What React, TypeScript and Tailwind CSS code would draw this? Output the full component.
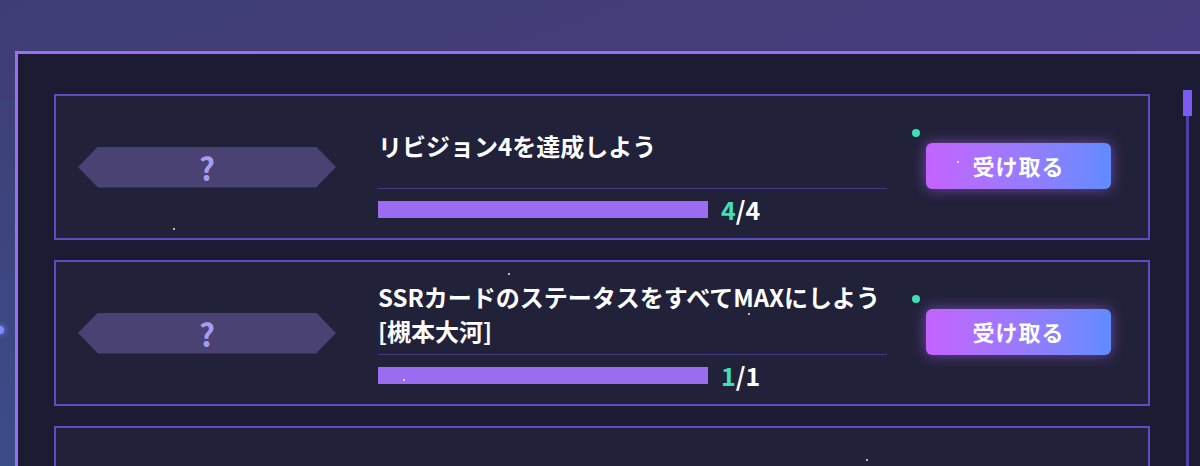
import React from "react";

const FONT = { fontFamily: '"Noto Sans CJK JP", "Noto Sans", sans-serif' };

function Hex() {
  return (
    <div
      className="w-[258px] h-[41px] bg-[#4a4273] flex items-center justify-center shrink-0"
      style={{ clipPath: "polygon(20px 0, 238px 0, 258px 50%, 238px 100%, 20px 100%, 0 50%)" }}
    >
      <span className="text-[31px] font-bold text-[#a89cf0] leading-none">?</span>
    </div>
  );
}

function Card({ title, done, total }: { title: React.ReactNode; done: number; total: number }) {
  return (
    <div className="relative shrink-0 h-[146px] border-2 border-[#5b4cc4] bg-[#22213a] flex items-center pl-[22px]">
      <Hex />
      <div className="ml-[42px] w-[509px] h-full flex flex-col justify-end pb-[17px]">
        <div className="relative -top-[2px] min-h-[53px] text-[24px] leading-[34px] font-bold text-white">{title}</div>
        <div className="mt-[4px] h-px bg-[#3f3a7c]" />
        <div className="mt-[8px] h-[24px] flex items-center">
          <div className="w-[330px] h-[17px] bg-[#9b6cf0]" />
          <div className="ml-[13px] text-[25px] leading-[24px] font-bold text-white">
            <span className="text-[#3fe0b8]">{done}</span>/{total}
          </div>
        </div>
      </div>
      <div className="relative ml-[39px] -mt-[3px]">
        <div className="absolute -left-[14px] -top-[14px] w-[8px] h-[8px] rounded-full bg-[#3de0b4]" />
        <button className="w-[185px] h-[46px] rounded-[6px] bg-gradient-to-r from-[#c462ff] to-[#5f8bff] text-white text-[22px] font-bold tracking-[1px] shadow-[0_0_14px_rgba(175,110,255,0.55)]">
          受け取る
        </button>
      </div>
    </div>
  );
}

function Dot({ x, y }: { x: number; y: number }) {
  return <div className="absolute w-[2px] h-[2px] rounded-full bg-white/90" style={{ left: x, top: y }} />;
}

export default function App() {
  return (
    <div
      className="relative w-[1200px] h-[466px] overflow-hidden bg-gradient-to-br from-[#3e3e74] via-[#463c7c] to-[#4b3a80] pt-[51px] pl-[15px]"
      style={FONT}
    >
      <div className="absolute left-0 top-[100px] w-[15px] h-[366px] bg-gradient-to-b from-[#3e4078] to-[#3b4d88]" />
      <div className="absolute -left-[4px] top-[326px] w-[8px] h-[8px] rounded-full bg-[#7a8cff] shadow-[0_0_6px_#7a8cff]" />
      <div className="relative h-[460px] border-t-[3px] border-l-[3px] border-[#9b6ff2] bg-[#1c1b34] pl-[36px] pt-[40px] flex items-start">
        <div className="w-[1096px] shrink-0 flex flex-col gap-[20px]">
          <Card title="リビジョン4を達成しよう" done={4} total={4} />
          <Card
            title={
              <>
                SSRカードのステータスをすべてMAXにしよう
                <br />
                [槻本大河]
              </>
            }
            done={1}
            total={1}
          />
          <div className="shrink-0 h-[146px] border-2 border-[#5b4cc4] bg-[#22213a]" />
        </div>
        <div className="relative ml-[33px] w-[9px] h-[420px]">
          <div className="absolute top-[20px] bottom-0 left-[3px] w-[3px] bg-[#4b3fa6]" />
          <div className="absolute top-[-4px] left-0 w-[9px] h-[26px] bg-[#7a5cf4]" />
        </div>
      </div>
      <Dot x={173} y={228} />
      <Dot x={508} y={273} />
      <Dot x={748} y={313} />
      <Dot x={403} y={379} />
      <Dot x={957} y={161} />
      <Dot x={866} y={459} />
    </div>
  );
}
